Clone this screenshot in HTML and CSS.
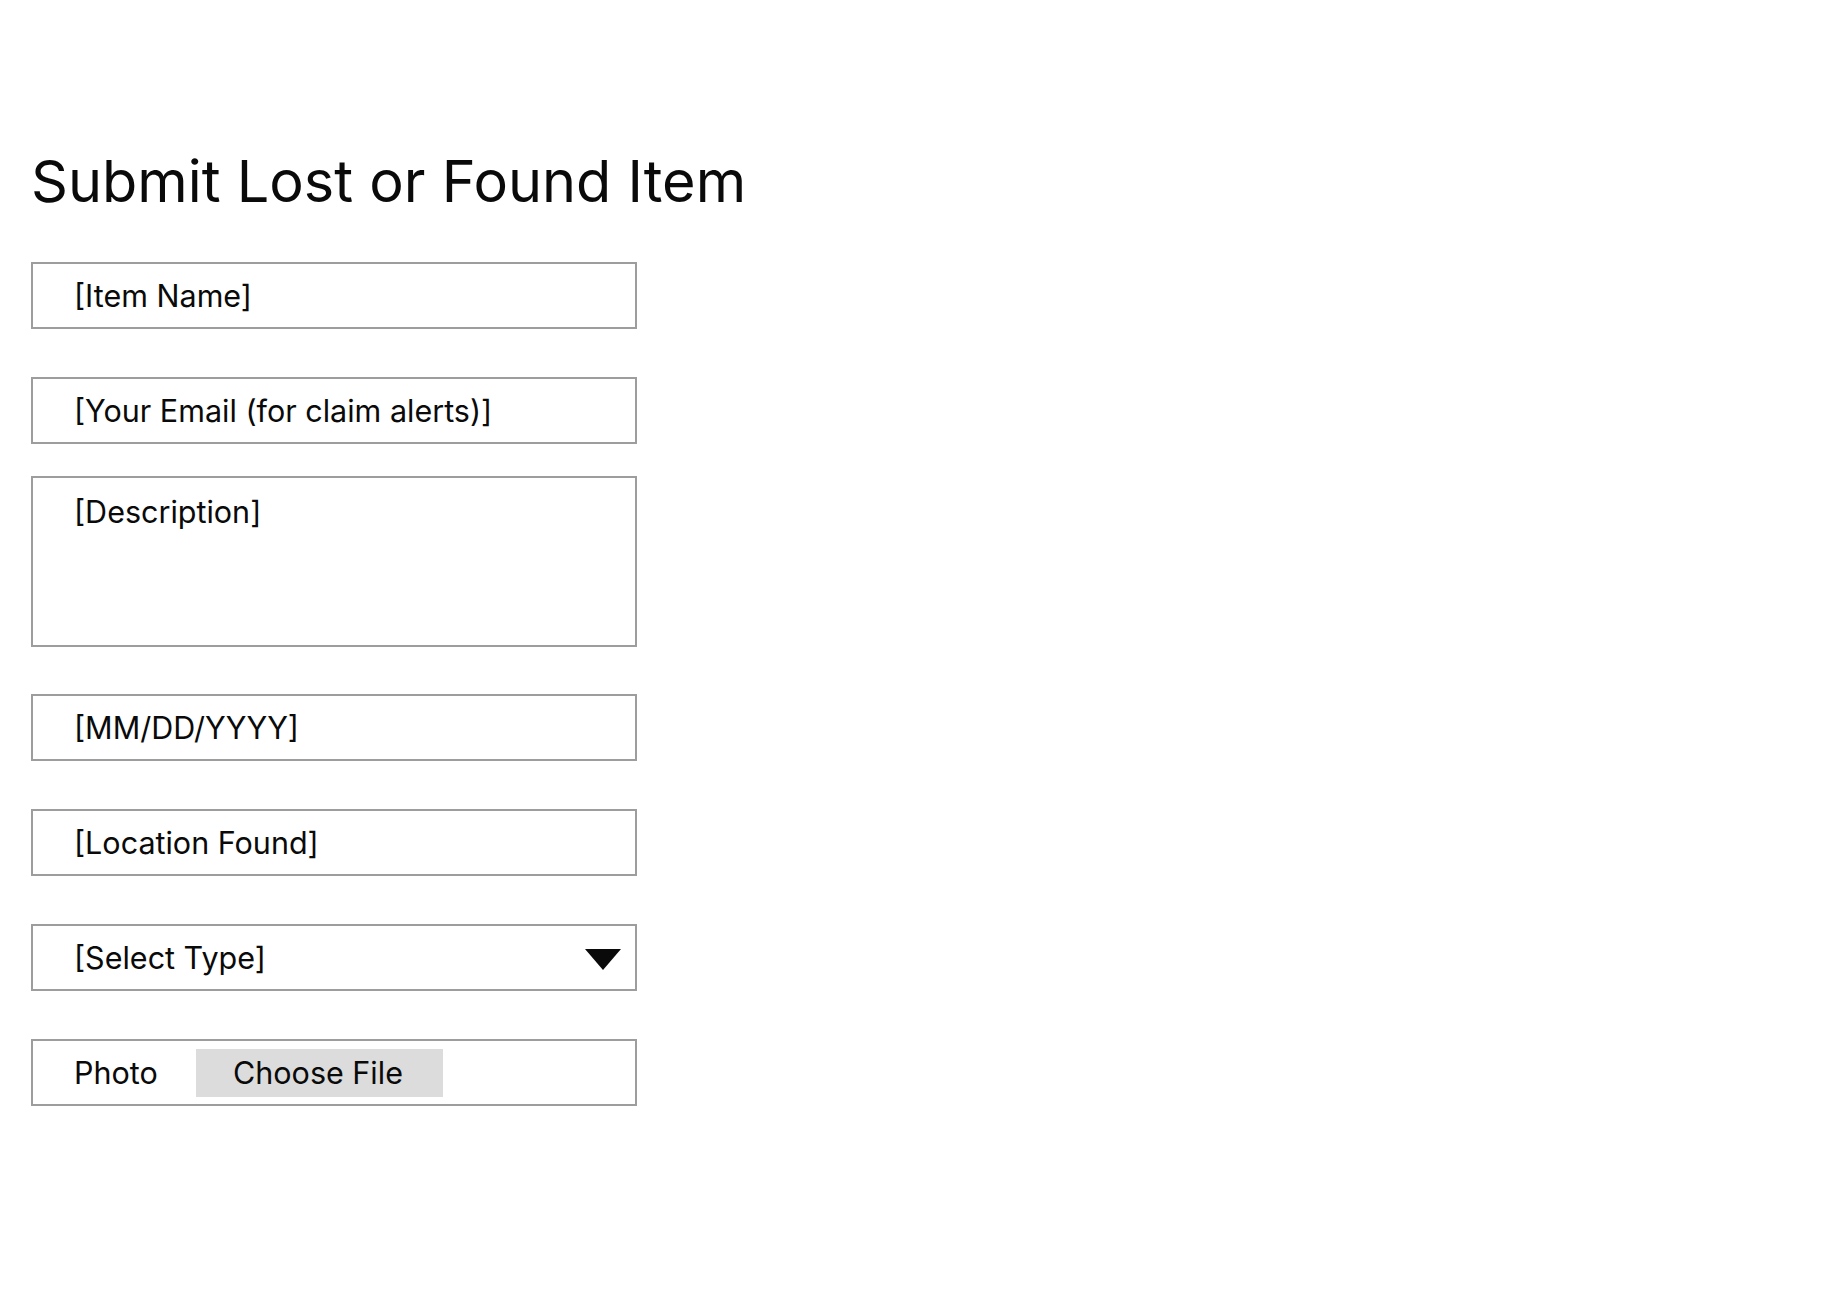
FILE: index.html
```html
<!DOCTYPE html>
<html lang="en">
<head>
<meta charset="utf-8">
<title>Submit Lost or Found Item</title>
<link rel="stylesheet" href="styles.css">
</head>
<body>
<main class="page">
  <h1 class="title">Submit Lost or Found Item</h1>
  <form class="form">
    <input class="field field-name" type="text" placeholder="[Item Name]">
    <input class="field field-email" type="email" placeholder="[Your Email (for claim alerts)]">
    <textarea class="field field-desc" placeholder="[Description]"></textarea>
    <input class="field field-date" type="text" placeholder="[MM/DD/YYYY]">
    <input class="field field-loc" type="text" placeholder="[Location Found]">
    <div class="field field-select">
      <span class="select-text">[Select Type]</span>
      <svg class="caret" width="36" height="21" viewBox="0 0 36 21"><polygon points="0,0 36,0 18,21" fill="#0a0a0a"/></svg>
    </div>
    <div class="field field-photo">
      <span class="photo-label">Photo</span>
      <span class="file-btn">Choose File</span>
    </div>
  </form>
</main>
</body>
</html>
```
FILE: styles.css
```css
html, body {
  margin: 0;
  padding: 0;
  background: #ffffff;
}
body {
  font-family: Inter, "Noto Sans", sans-serif;
  color: #0a0a0a;
}
.page {
  padding: 145px 0 0 31px;
}
.title {
  margin: 0;
  font-size: 57.6px;
  font-weight: 400;
  line-height: 72px;
  color: #0a0a0a;
}
.form {
  display: flex;
  flex-direction: column;
  width: 606px;
  margin-top: 45px;
}
.field {
  box-sizing: border-box;
  width: 606px;
  height: 67px;
  border: 2px solid #9d9d9d;
  background: #fff;
  padding: 0 0 0 41px;
  font-family: Inter, "Noto Sans", sans-serif;
  font-size: 30.5px;
  color: #0a0a0a;
  margin: 0 0 48px 0;
  outline: none;
  border-radius: 0;
}
.field::placeholder {
  color: #0a0a0a;
  opacity: 1;
}
.field-email {
  margin-bottom: 32px;
}
.field-desc {
  height: 171px;
  resize: none;
  padding-top: 16px;
  line-height: 36px;
  margin-bottom: 47px;
}
.field-select {
  display: flex;
  align-items: center;
  justify-content: space-between;
  padding-right: 14px;
}
.caret {
  display: block;
  margin-top: 4px;
}
.field-photo {
  display: flex;
  align-items: center;
}
.photo-label {
  width: 122px;
}
.file-btn {
  box-sizing: border-box;
  width: 247px;
  height: 48px;
  background: #dcdcdc;
  display: flex;
  align-items: center;
  padding-left: 37px;
  color: #0a0a0a;
}
```
